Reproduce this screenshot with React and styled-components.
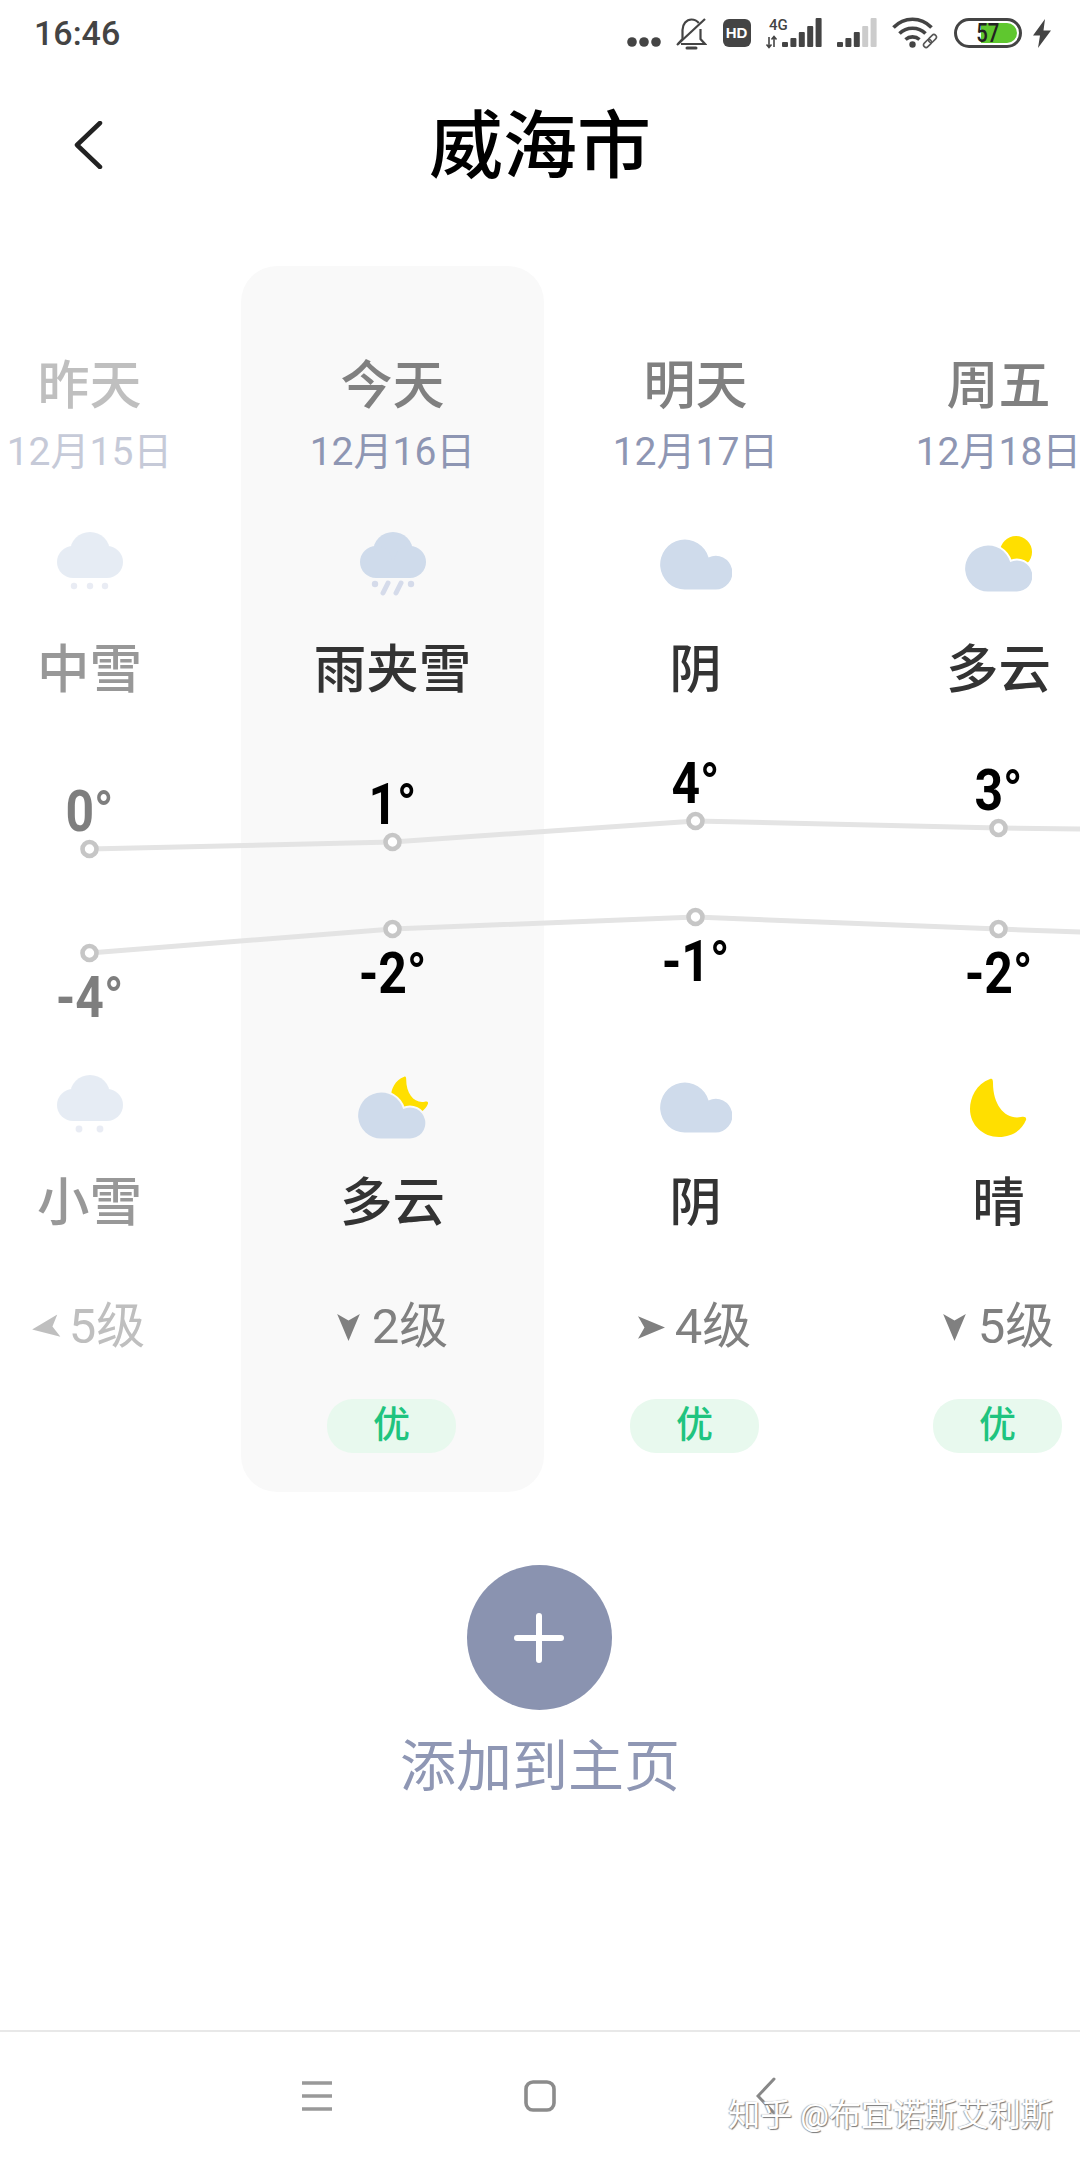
import React from 'react';
import styled, { createGlobalStyle } from 'styled-components';

const GlobalStyle = createGlobalStyle`
  html, body {
    margin: 0;
    padding: 0;
    background: #fff;
  }
  body {
    font-family: Roboto, "Noto Sans CJK SC", sans-serif;
    font-synthesis: none;
  }
`;

const COLUMN_WIDTH = 303;
const CHART_TOP = 699;
const CLOUD = 'M23 55.5A23 23 0 1 1 45.2 26A15.5 15.5 0 1 1 51.5 55.5Z';
const MOON = 'M20 1C6 6 0 20 0 31C0 47 13 59 29 59C42 59 52 52 56 42C57 39 54 38 51 39C36 42 23 28 23 5C23 1 22 0 20 1Z';

const days = [
    { day: '昨天', date: '12月15日', top: 'snow', topText: '中雪', high: 0, highY: 849, low: -4, lowY: 953, bottom: 'lightSnow', bottomText: '小雪', angle: 82, wind: '5级', past: true },
    { day: '今天', date: '12月16日', top: 'sleet', topText: '雨夹雪', high: 1, highY: 842, low: -2, lowY: 929, bottom: 'cloudyMoon', bottomText: '多云', angle: 0, wind: '2级', quality: '优', active: true },
    { day: '明天', date: '12月17日', top: 'overcast', topText: '阴', high: 4, highY: 821, low: -1, lowY: 917, bottom: 'overcast', bottomText: '阴', angle: -90, wind: '4级', quality: '优' },
    { day: '周五', date: '12月18日', top: 'cloudySun', topText: '多云', high: 3, highY: 828, low: -2, lowY: 929, bottom: 'moon', bottomText: '晴', angle: 0, wind: '5级', quality: '优' },
];

const Page = styled.div`
    position: relative;
    width: 1080px;
    height: 2160px;
    display: flex;
    flex-direction: column;
    overflow: hidden;
    background: #fff;
`;

const StatusBar = styled.div`
    height: 66px;
    display: flex;
    align-items: center;
    justify-content: space-between;
    padding: 0 29px 0 34px;
    color: #444;
`;

const Clock = styled.span`
    font-size: 34px;
    font-weight: 500;
`;

const StatusIcons = styled.div`
    display: flex;
    align-items: center;
    gap: 15.3px;
`;

const HdBadge = styled.div`
    width: 28px;
    height: 28px;
    border-radius: 6px;
    background: #444;
    color: #fff;
    font-family: "Liberation Sans", sans-serif;
    font-size: 15px;
    font-weight: 700;
    line-height: 28px;
    text-align: center;
`;

const Battery = styled.div`
    position: relative;
    box-sizing: border-box;
    width: 68px;
    height: 30px;
    margin-right: -4px;
    border: 3px solid #444;
    border-radius: 15px;
    text-align: center;
    font-size: 26px;
    font-weight: 500;
    line-height: 24px;
    color: #222;
`;

const BatteryFill = styled.div`
    position: absolute;
    top: 2px;
    right: 2px;
    bottom: 2px;
    border-radius: 0 10px 10px 0;
    background: #5fc72f;
`;

const BatteryLevel = styled.span`
    position: relative;
    display: inline-block;
    transform: scaleX(0.78);
`;

const Header = styled.header`
    height: 162px;
    margin-bottom: 38px;
    display: grid;
    grid-template-columns: 1fr auto 1fr;
    align-items: center;
`;

const BackButton = styled.div`
    display: flex;
    padding-left: 72px;
    padding-bottom: 4px;
`;

const Title = styled.h1`
    margin: 0;
    font-size: 74px;
    font-weight: 500;
    line-height: 94px;
    color: #000;
`;

const Forecast = styled.section`
    position: relative;
    display: flex;
    flex: none;
    width: ${COLUMN_WIDTH * 4}px;
    margin-left: -62px;
`;

const Column = styled.div`
    box-sizing: border-box;
    width: ${COLUMN_WIDTH}px;
    height: 1226px;
    padding-top: 91px;
    display: flex;
    flex-direction: column;
    align-items: center;
    border-radius: 36px;
    background: ${({ $active }) => ($active ? '#f9f9f9' : 'transparent')};
    opacity: ${({ $past }) => ($past ? 0.5 : 1)};
`;

const DayName = styled.div`
    height: 60px;
    font-size: 52px;
    font-weight: 500;
    line-height: 60px;
    color: #808080;
`;

const DayDate = styled.div`
    height: 48px;
    margin-top: 11px;
    font-size: 39px;
    line-height: 48px;
    color: #8e96b3;
`;

const IconSlot = styled.div`
    height: 80px;
    display: flex;
    align-items: center;
    justify-content: center;
    margin-top: ${({ $top }) => $top}px;
`;

const Condition = styled.div`
    height: 60px;
    margin-top: ${({ $top }) => $top}px;
    font-size: 52.5px;
    font-weight: 500;
    line-height: 60px;
    color: #333;
`;

const ChartSlot = styled.div`
    position: relative;
    align-self: stretch;
    height: 367px;
`;

const Temperature = styled.div`
    position: absolute;
    left: 0;
    right: 0;
    text-align: center;
    font-size: 58px;
    font-weight: 700;
    line-height: 60px;
    color: #000;
    transform: scaleX(0.86);
`;

const Wind = styled.div`
    height: 56px;
    margin-top: 66px;
    display: flex;
    align-items: center;
    gap: 12px;
    font-size: 49px;
    line-height: 56px;
    color: #808080;
`;

const Quality = styled.div`
    width: 129px;
    height: 54px;
    margin-top: 44px;
    margin-right: 2px;
    border-radius: 26px;
    background: #e8f9ee;
    color: #1fc47f;
    font-size: 37px;
    font-weight: 500;
    line-height: 54px;
    text-align: center;
`;

const ChartLines = styled.svg`
    position: absolute;
    left: 0;
    top: ${CHART_TOP - 266}px;
    pointer-events: none;
`;

const AddArea = styled.div`
    display: flex;
    flex-direction: column;
    align-items: center;
    margin-top: 73px;
`;

const AddButton = styled.div`
    width: 145px;
    height: 145px;
    margin-right: 2px;
    border-radius: 50%;
    background: #8a93b0;
    display: flex;
    align-items: center;
    justify-content: center;
`;

const AddLabel = styled.div`
    margin-top: 22px;
    font-size: 56px;
    line-height: 70px;
    color: #8f97b4;
`;

const NavBar = styled.nav`
    box-sizing: border-box;
    height: 130px;
    margin-top: auto;
    border-top: 2px solid #e8e8e8;
    display: flex;
    align-items: center;
    justify-content: center;
`;

const NavSlot = styled.div`
    width: 226px;
    box-sizing: border-box;
    padding-left: ${({ $nudge = 0 }) => $nudge}px;
    display: flex;
    justify-content: center;
`;

const Watermark = styled.div`
    position: absolute;
    right: 27px;
    bottom: 27px;
    font-size: 32px;
    line-height: 36px;
    color: #fff;
    text-shadow: 1px 1px 1px #777, -1px 0 1px #aaa;
`;

const CloudShape = ({ halo }) => (
    <path d={CLOUD} fill="#cfdbeb" stroke={halo} strokeWidth={halo ? 4 : 0} paintOrder="stroke" />
);

const RoundCloud = () => (
    <g fill="#cfdbeb">
        <circle cx="33" cy="20" r="20" />
        <circle cx="16" cy="30" r="16" />
        <circle cx="50" cy="30" r="16" />
        <rect x="16" y="28" width="34" height="18" />
    </g>
);

const WeatherIcon = ({ kind, halo }) => {
    if (kind === 'sleet') {
        return (
            <svg width="66" height="64" viewBox="0 0 66 64">
                <RoundCloud />
                <g fill="#d5dbea">
                    <circle cx="15" cy="52" r="3.2" />
                    <circle cx="51" cy="52" r="3.2" />
                </g>
                <path d="M28 51L23 61M41 51L36 61" stroke="#d5dbea" strokeWidth="5" strokeLinecap="round" />
            </svg>
        );
    }
    if (kind === 'snow') {
        return (
            <svg width="66" height="64" viewBox="0 0 66 64">
                <RoundCloud />
                <g fill="#d5dbea">
                    <circle cx="17" cy="54" r="3.2" />
                    <circle cx="33" cy="54" r="3.2" />
                    <circle cx="48" cy="54" r="3.2" />
                </g>
            </svg>
        );
    }
    if (kind === 'lightSnow') {
        return (
            <svg width="66" height="64" viewBox="0 0 66 64">
                <RoundCloud />
                <g fill="#d5dbea">
                    <circle cx="22" cy="54" r="3.4" />
                    <circle cx="43" cy="54" r="3.4" />
                </g>
            </svg>
        );
    }
    if (kind === 'overcast') {
        return (
            <svg width="72" height="51" viewBox="0 9 67 47" preserveAspectRatio="none">
                <CloudShape />
            </svg>
        );
    }
    if (kind === 'cloudySun') {
        return (
            <svg width="67" height="56" viewBox="0 0 67 56">
                <circle cx="51" cy="16" r="16" fill="#ffdf00" />
                <CloudShape halo={halo} />
            </svg>
        );
    }
    if (kind === 'cloudyMoon') {
        return (
            <svg width="70" height="63" viewBox="0 0 70 63">
                <path d={MOON} fill="#ffdf00" transform="translate(33 0) scale(.66)" />
                <g transform="translate(0 7)">
                    <CloudShape halo={halo} />
                </g>
            </svg>
        );
    }
    return (
        <svg width="57" height="59" viewBox="0 0 57 59">
            <path d={MOON} fill="#ffdf00" />
        </svg>
    );
};

const WindArrow = ({ angle }) => (
    <svg width="23" height="27" viewBox="0 0 21 25" style={{ transform: `rotate(${angle}deg)` }}>
        <path d="M0 0L10.5 6L21 0L10.5 25Z" fill="currentColor" />
    </svg>
);

const SignalBars = ({ x, off = 0 }) => (
    <g transform={`translate(${x} 0)`}>
        {[5, 9, 15, 21, 29].map((height, i) => (
            <rect key={i} x={i * 8.4} y={29 - height} width="6" height={height} rx="1" fill={i >= 5 - off ? '#ccc' : '#444'} />
        ))}
    </g>
);

const TempLine = ({ points }) => (
    <g>
        <polyline
            points={points.map(([x, y]) => `${x},${y}`).join(' ')}
            fill="none"
            stroke="#e4e4e4"
            strokeWidth="5"
        />
        {points.slice(0, 4).map(([x, y]) => (
            <circle key={x} cx={x} cy={y} r="7" fill="#fff" stroke="#c6c6c6" strokeWidth="4.6" />
        ))}
    </g>
);

const columnCenter = index => COLUMN_WIDTH * index + COLUMN_WIDTH / 2;

const linePoints = (key, lastY) => [
    ...days.map((d, i) => [columnCenter(i), d[key] - CHART_TOP]),
    [columnCenter(4), lastY - CHART_TOP],
];

const App = () => (
    <Page>
        <GlobalStyle />
        <StatusBar>
            <Clock>16:46</Clock>
            <StatusIcons>
                <svg width="34" height="32" viewBox="0 0 34 32">
                    <g fill="#444">
                        <circle cx="5" cy="25" r="4.8" />
                        <circle cx="17" cy="25" r="4.8" />
                        <circle cx="29" cy="25" r="4.8" />
                    </g>
                </svg>
                <svg width="31" height="33" viewBox="0 0 31 33">
                    <path d="M2 27L6.5 22V13C6.5 7 10.5 2.5 15.5 2.5C18.5 2.5 21 3.8 22.8 6M24.5 12V22L29 27H5" fill="none" stroke="#444" strokeWidth="2.2" />
                    <path d="M1 28L29 2" stroke="#444" strokeWidth="2.2" />
                    <path d="M11 31H20" stroke="#444" strokeWidth="3" strokeLinecap="round" />
                </svg>
                <HdBadge>HD</HdBadge>
                <svg width="56" height="31" viewBox="0 0 56 31" overflow="visible">
                    <text x="3" y="12" fontSize="15" fontWeight="500" fontFamily="Roboto, sans-serif" fill="#444">4G</text>
                    <path d="M3 19V29M0.5 26.5L3 29.5L5.5 26.5M8 29V19M5.5 21.5L8 18.5L10.5 21.5" fill="none" stroke="#444" strokeWidth="1.6" />
                    <SignalBars x="16" />
                </svg>
                <svg width="40" height="31" viewBox="0 0 40 31">
                    <SignalBars x="0" off={2} />
                </svg>
                <svg width="46" height="32" viewBox="0 0 46 32">
                    <g fill="none" stroke="#444" strokeWidth="3.6">
                        <path d="M1.5 10.5C12 -0.5 29 -0.5 39.5 10.5" />
                        <path d="M7.5 16.5C14.5 9.5 26.5 9.5 33.5 16.5" />
                        <path d="M13.5 22.5C17.5 19 23.5 19 27.5 22.5" />
                    </g>
                    <circle cx="20.5" cy="27.5" r="3.2" fill="#444" />
                    <g fill="none" stroke="#555" strokeWidth="1.6" transform="rotate(-45 38 24)">
                        <rect x="30" y="21.5" width="9" height="5" rx="2.5" />
                        <rect x="37" y="21.5" width="9" height="5" rx="2.5" />
                    </g>
                </svg>
                <Battery>
                    <BatteryFill style={{ width: '57%' }} />
                    <BatteryLevel>57</BatteryLevel>
                </Battery>
                <svg width="18" height="29" viewBox="0 0 18 29">
                    <path d="M12 0L0 16.5H7L5 29L18 11.5H10.5Z" fill="#444" />
                </svg>
            </StatusIcons>
        </StatusBar>

        <Header>
            <BackButton>
                <svg width="32" height="48" viewBox="0 0 32 48">
                    <path d="M28 2L5 24L28 46" fill="none" stroke="#222" strokeWidth="4.5" strokeLinecap="round" strokeLinejoin="round" />
                </svg>
            </BackButton>
            <Title>威海市</Title>
        </Header>

        <Forecast>
            {days.map(d => {
                const halo = d.active ? '#f9f9f9' : '#fff';
                return (
                    <Column key={d.day} $active={d.active} $past={d.past}>
                        <DayName>{d.day}</DayName>
                        <DayDate>{d.date}</DayDate>
                        <IconSlot $top={48}>
                            <WeatherIcon kind={d.top} halo={halo} />
                        </IconSlot>
                        <Condition $top={36}>{d.topText}</Condition>
                        <ChartSlot>
                            <Temperature style={{ top: d.highY - CHART_TOP - 69 }}>{d.high}°</Temperature>
                            <Temperature style={{ top: d.lowY - CHART_TOP + 13 }}>{d.low}°</Temperature>
                        </ChartSlot>
                        <IconSlot $top={0}>
                            <WeatherIcon kind={d.bottom} halo={halo} />
                        </IconSlot>
                        <Condition $top={26}>{d.bottomText}</Condition>
                        <Wind>
                            <WindArrow angle={d.angle} />
                            {d.wind}
                        </Wind>
                        {d.quality && <Quality>{d.quality}</Quality>}
                    </Column>
                );
            })}
            <ChartLines width={COLUMN_WIDTH * 4} height="368" viewBox={`0 0 ${COLUMN_WIDTH * 4} 368`}>
                <TempLine points={linePoints('highY', 832)} />
                <TempLine points={linePoints('lowY', 940)} />
            </ChartLines>
        </Forecast>

        <AddArea>
            <AddButton>
                <svg width="50" height="50" viewBox="0 0 50 50">
                    <path d="M25 3V47M3 25H47" stroke="#fff" strokeWidth="6" strokeLinecap="round" />
                </svg>
            </AddButton>
            <AddLabel>添加到主页</AddLabel>
        </AddArea>

        <NavBar>
            <NavSlot $nudge={5}>
                <svg width="30" height="30" viewBox="0 0 30 30">
                    <path d="M0 2H30M0 15H30M0 28H30" stroke="#999" strokeWidth="3.6" />
                </svg>
            </NavSlot>
            <NavSlot>
                <svg width="32" height="32" viewBox="0 0 32 32">
                    <rect x="2" y="2" width="28" height="28" rx="7" fill="none" stroke="#8c8c8c" strokeWidth="3.6" />
                </svg>
            </NavSlot>
            <NavSlot>
                <svg width="20" height="38" viewBox="0 0 20 38">
                    <path d="M18 2L2 19L18 36" fill="none" stroke="#888" strokeWidth="3" strokeLinecap="round" />
                </svg>
            </NavSlot>
        </NavBar>
        <Watermark>知乎 @布宜诺斯艾利斯</Watermark>
    </Page>
);

export default App;
